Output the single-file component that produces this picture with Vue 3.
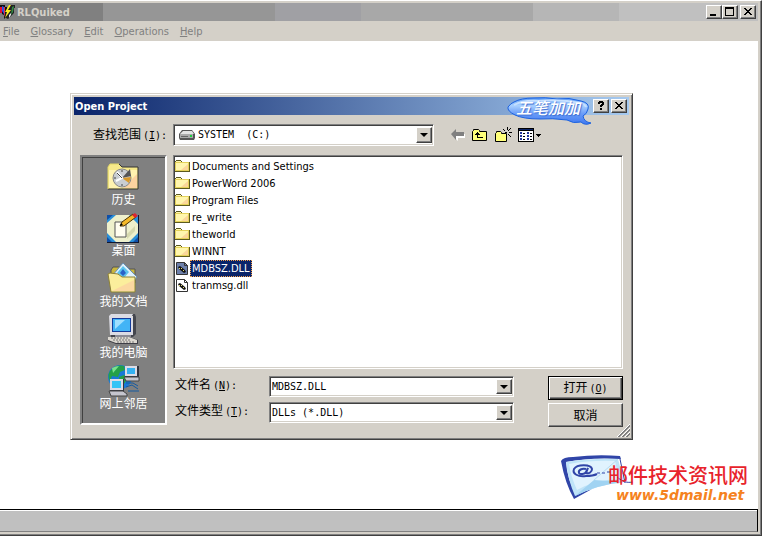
<script setup>
import { ref } from 'vue'

const menus = ['File', 'Glossary', 'Edit', 'Operations', 'Help']
const files = [
  { name: 'Documents and Settings', folder: true },
  { name: 'PowerWord 2006', folder: true },
  { name: 'Program Files', folder: true },
  { name: 're_write', folder: true },
  { name: 'theworld', folder: true },
  { name: 'WINNT', folder: true },
  { name: 'MDBSZ.DLL', folder: false },
  { name: 'tranmsg.dll', folder: false },
]
const places = [
  { id: 'history', label: '历史' },
  { id: 'desktop', label: '桌面' },
  { id: 'documents', label: '我的文档' },
  { id: 'computer', label: '我的电脑' },
  { id: 'network', label: '网上邻居' },
]
const selected = ref('MDBSZ.DLL')
const fileName = ref('MDBSZ.DLL')

function pick(file) {
  selected.value = file.name
  if (!file.folder) fileName.value = file.name
}
</script>

<template>
  <div class="window">
    <header class="titlebar">
      <svg class="app-icon" width="16" height="16" viewBox="0 0 16 16" aria-hidden="true">
        <path d="M0 1h5v2h2v9l-3 3v-4l-2-1v-2H0z" fill="#111" />
        <path d="M0 3h2v6H0z" fill="#e01030" />
        <path d="M2 2l2 1v7l-2-3z" fill="#3050e0" />
        <path d="M4 3h1v9H4z" fill="#e03050" />
        <path d="M10 1h5v3h-1v5l-3 3-3 3-4-2 1-3z" fill="#222" />
        <path d="M9 1L5 8h2l-2 6 6-8H8l3-5z" fill="#ffee20" />
        <path d="M12 3l2-1-1 6-2 3z" fill="#2f8b45" />
        <path d="M9 11l2-2v2l-2 3z" fill="#e8e8e8" />
      </svg>
      <h1>RLQuiked</h1>
      <div class="controls">
        <button class="cap" aria-label="Minimize">
          <svg width="12" height="10" viewBox="0 0 12 10"><path d="M2 7h6v2H2z" /></svg>
        </button>
        <button class="cap" aria-label="Maximize">
          <svg width="12" height="10" viewBox="0 0 12 10"><path d="M1 0h9v9H1zM2 2v6h7V2z" fill-rule="evenodd" /></svg>
        </button>
        <button class="cap close" aria-label="Close">
          <svg width="12" height="10" viewBox="0 0 12 10"><path d="M2 1h2v1h1v1h2V2h1V1h2v1H9v1H8v1H7v1h1v1h1v1h1v1H8V7H7V6H5v1H4v1H2V7h1V6h1V5h1V4H4V3H3V2H2z" /></svg>
        </button>
      </div>
    </header>

    <nav class="menubar">
      <button v-for="m in menus" :key="m"><u>{{ m[0] }}</u>{{ m.slice(1) }}</button>
    </nav>

    <main class="client">
      <a class="brand" href="#">
        <svg class="envelope" width="72" height="46" viewBox="0 0 72 46" aria-hidden="true">
          <path d="M0 6Q2 2 12 2Q36-1 59 1L60 4Q30 2 5 7Q6 24 15 39L31 34L13 44Q4 28 0 6z" fill="#3045a8" />
          <path d="M5 7Q30 3 57 4L63 27Q35 30 14 41Q7 25 5 7z" fill="#bfe4f8" />
          <path d="M8 9Q30 5 54 6L58 24Q34 25 16 35Q10 22 8 9z" fill="#e0f3fe" />
          <path d="M14 41L33 25L63 27Q35 30 14 41z" fill="#a0d3f2" />
          <path d="M33 25L57 4" stroke="#b6dcf2" fill="none" />
          <path d="M25 14c-4-1-8 1-7 4 1 2 6 1 7-1l2-4-2 5c3 1 6-1 6-4-1-5-15-5-18 0-2 5 4 8 12 7 5 0 9-1 11-2" fill="none" stroke="#3045a8" stroke-width="2" />
          <path d="M36 18h3m2 0h3m2-1h4M59 4l5 24M56 22c6 5 10 6 16 5" stroke="#3045a8" stroke-width="1" fill="none" />
        </svg>
        <span class="brand-text">
          <span class="brand-cn">邮件技术资讯网</span>
          <span class="brand-url">www.5dmail.net</span>
        </span>
      </a>
    </main>

    <footer class="status"></footer>

    <section class="dialog" role="dialog" aria-labelledby="dlg-title">
      <header class="dlg-title">
        <h2 id="dlg-title">Open Project</h2>
        <div class="controls">
          <button class="cap" aria-label="Help">
            <svg width="12" height="10" viewBox="0 0 12 10"><path d="M4 0h4v1h1v3H8v1H7v1H5V4h1V3h1V2H5v1H3V1h1zM5 7h2v2H5z" /></svg>
          </button>
          <button class="cap close" aria-label="Close">
            <svg width="12" height="10" viewBox="0 0 12 10"><path d="M2 1h2v1h1v1h2V2h1V1h2v1H9v1H8v1H7v1h1v1h1v1h1v1H8V7H7V6H5v1H4v1H2V7h1V6h1V5h1V4H4V3H3V2H2z" /></svg>
          </button>
        </div>
      </header>

      <div class="ime">
        <svg width="86" height="30" viewBox="0 0 86 30" aria-hidden="true">
          <defs>
            <linearGradient id="bubble" x1="0" y1="0" x2="0" y2="1">
              <stop offset="0" stop-color="#5b9cf6" />
              <stop offset="0.3" stop-color="#a9d0ff" />
              <stop offset="0.6" stop-color="#6a9cf8" />
              <stop offset="1" stop-color="#3f78f0" />
            </linearGradient>
          </defs>
          <path d="M1 10Q4 6 7 5Q14 1 27 1Q38 0 50 2Q62 0 74 4Q83 6 81 12Q80 17 76 19Q77 25 84 26Q78 29 74 25Q66 27 60 23Q45 21 33 22Q16 22 8 18Q0 14 1 10z" fill="url(#bubble)" stroke="#1c62e0" />
          <path d="M7 8Q16 3 32 4Q54 2 73 6Q78 7 79 10" fill="none" stroke="#c6e0ff" stroke-width="2" />
        </svg>
        <span>五笔加加</span>
      </div>

      <div class="dlg-body">
        <div class="lookin">
          <label for="look">查找范围<i>(<u>I</u>):</i></label>
          <div class="combo">
            <svg class="drive" width="16" height="10" viewBox="0 0 16 10" aria-hidden="true">
              <path d="M3 0h10l3 4v4l-1 2H1L0 8V4z" fill="#555" />
              <path d="M4 1h9l2 3H1z" fill="#e4e4e4" />
              <path d="M1 4h13v4H1z" fill="#aaa" />
              <path d="M2 6h7v1H2z" fill="#666" />
              <path d="M11 5h2v2h-2z" fill="#20d040" />
            </svg>
            <select id="look"><option>SYSTEM&nbsp; (C:)</option></select>
            <span class="arrow"></span>
          </div>
          <div class="tools">
            <button aria-label="Back">
              <svg width="14" height="12" viewBox="0 0 14 12"><path d="M2 7l5 5V9h7V5H8" fill="#fff" /><path d="M0 5l5-5v3h8v4H5v4z" fill="#808080" /></svg>
            </button>
            <button aria-label="Up one level">
              <svg width="16" height="14" viewBox="0 0 16 14">
                <path d="M.5 3.5l1-1v-1h5l1 1v1h7v9H.5z" fill="#ffff7a" stroke="#000" />
                <path d="M5 4h1v1h1v1h1v1H6v2h5v1H5V7H3V6h1V5h1z" />
              </svg>
            </button>
            <button aria-label="New folder">
              <svg width="17" height="16" viewBox="0 0 17 16">
                <path d="M.5 6.5l1-1v-1h4l1 1v1h5v8H.5z" fill="#ffff7a" stroke="#000" />
                <path d="M12 0h1v3h-1zM8 2h1v1H8zM9 3h1v1H9zM15 1h1v1h-1zM14 2h1v1h-1zM13 3h1v1h-1zM14 5h3v1h-3zM13 7h1v1h-1zM14 8h1v1h-1zM10 5h2v1h-2zM15 9h1v1h-1z" />
              </svg>
            </button>
            <button class="views" aria-label="Views">
              <svg width="24" height="14" viewBox="0 0 24 14">
                <path d="M0 0h16v14H0z" /><path d="M1 3h14v10H1z" fill="#fff" /><path d="M1 1h14v1H1z" fill="#0a246a" />
                <path d="M2 4h2v2H2zM2 7h2v2H2zM2 10h2v2H2zM9 4h2v2H9zM9 7h2v2H9zM9 10h2v2H9z" fill="#23349a" />
                <path d="M5 5h2v1H5zM5 8h2v1H5zM5 11h2v1H5zM12 5h2v1h-2zM12 8h2v1h-2zM12 11h2v1h-2z" />
                <path d="M18 6h5v1h-1v1h-1v1h-1V8h-1V7h-1z" />
              </svg>
            </button>
          </div>
        </div>

        <div class="panes">
          <nav class="places">
            <button v-for="p in places" :key="p.id">
              <svg width="34" height="32" viewBox="0 0 34 32" aria-hidden="true">
                <g v-if="p.id === 'history'">
                  <path d="M1 6l2-3h9l3 3h16v22H1z" fill="#f7e98a" />
                  <path d="M2 9h28v18H2z" fill="#fff3b0" />
                  <path d="M16 27l14-14v14z" fill="#fbd3a0" />
                  <path d="M12 3l3 3h16v22H1" fill="none" stroke="#333" />
                  <path d="M1 28V6l2-3h9" fill="none" stroke="#e2d868" />
                  <circle cx="15" cy="17" r="9" fill="#c9cdd1" stroke="#888" />
                  <path d="M15 17l8-9 1 7z" fill="#555" />
                  <path d="M15 17l9-1-2 6z" fill="#d99a2b" />
                  <path d="M10 11l5 6-6 3" fill="none" stroke="#fff" stroke-width="2" />
                  <path d="M10 12l5 5M15 9v2M15 23v2M7 17h2" fill="none" stroke="#444" />
                </g>
                <g v-else-if="p.id === 'desktop'">
                  <path d="M0 3h32v28H0z" fill="#101830" />
                  <path d="M0 3h31v27H0z" fill="#eef0cc" />
                  <path d="M0 3h9L0 11zM31 3v9L22 3zM0 30v-9l9 9zM31 30h-9l9-9z" fill="#2a8fd8" />
                  <path d="M0 3h6L0 8zM0 30v-5l5 5zM31 30h-5l5-5z" fill="#0f4fa8" />
                  <path d="M20 22l8-8v5l-8 8z" fill="#d6d8ae" />
                  <path d="M8 10h11v15H8z" fill="#fffdf0" stroke="#555" />
                  <path d="M13 14l2-4L26 2l3 3-12 9z" fill="#f4b929" stroke="#4b3200" />
                  <path d="M25 3l3-2 3 3-3 2z" fill="#dc2430" />
                  <path d="M13 14l1-3 2 2z" />
                </g>
                <g v-else-if="p.id === 'documents'">
                  <path d="M4 7l2-3h8l2 2h12v14H4z" fill="#c9b63e" stroke="#555" />
                  <path d="M5 13L16 0l14 14-4 5H8z" fill="#dff1fb" stroke="#698fb5" />
                  <path d="M10 10l6-7 6 6-5 6z" fill="#5cc4ee" />
                  <path d="M13 10l3-4 3 4-3 3z" fill="#2a62c8" />
                  <path d="M1 11l2-1 8 1 4 3h13v15H4z" fill="#fbee9c" stroke="#8d8134" />
                  <path d="M5 28l22-11v11z" fill="#fbd8a0" />
                </g>
                <g v-else-if="p.id === 'computer'">
                  <path d="M3 2l3-2h22l1 3v17l-3 3H4z" fill="#44464e" />
                  <path d="M2 2h24v19H3zM4 0h22l-1 2H2z" fill="#dcdce4" />
                  <path d="M5 4h19v14H5z" fill="#143c9c" />
                  <path d="M6 5h17v12H6z" fill="#42b4f6" />
                  <path d="M8 6h10L8 15z" fill="#9fe0ff" />
                  <path d="M8 21h16v3H8z" fill="#8c8c96" />
                  <path d="M1 23h22l8 3v4H9l-8-3z" fill="#3e3e46" />
                  <path d="M1 23h21l8 3v3H9l-8-3z" fill="#dcd8d0" />
                  <path d="M4 24h18M6 26h17M10 28h18" stroke="#777" stroke-dasharray="2 1" />
                </g>
                <g v-else>
                  <circle cx="13" cy="12" r="12" fill="#1878d8" />
                  <path d="M3 6Q9-1 17 1l1 4-5 2-2 5-6-1-2 5Q0 11 3 6zM12 12l5-2 4 3-4 6h-5z" fill="#24a048" />
                  <path d="M5 3Q9 1 12 1L6 8z" fill="#7ce08c" />
                  <path d="M18 1h14v12H18z" fill="#33353f" /><path d="M18 1h12v10H18z" fill="#dcdce6" /><path d="M20 3h8v6h-8z" fill="#35b2f2" />
                  <path d="M17 12h15v4H19z" fill="#c5c5ce" stroke="#444" />
                  <path d="M3 14h14v12H3z" fill="#33353f" /><path d="M3 14h13v11H3z" fill="#dcdce6" /><path d="M5 16h9v7H5z" fill="#35c4f6" />
                  <path d="M2 26h14l4 3v2H4z" fill="#c5c5ce" stroke="#444" />
                  <path d="M19 18h7l5 3M19 22l6-2 6 4M21 26h11" stroke="#155aa0" fill="none" />
                </g>
              </svg>
              <span>{{ p.label }}</span>
            </button>
          </nav>

          <div class="right">
            <div class="list" role="listbox" aria-label="Files">
              <button
                v-for="f in files"
                :key="f.name"
                role="option"
                :aria-selected="f.name === selected"
                :class="{ sel: f.name === selected }"
                @click="pick(f)"
              >
                <svg v-if="f.folder" width="15" height="15" viewBox="0 0 15 15" aria-hidden="true">
                  <path d="M0 2h1V1h5v1h1v1h8v10H0z" fill="#5c5a20" />
                  <path d="M0 3h14v9H0z" fill="#e4d25a" />
                  <path d="M1 2h5v1H1zM1 4h12v7H1z" fill="#fff6ae" />
                  <path d="M6 11l7-6v6z" fill="#fbd79a" />
                </svg>
                <svg v-else width="15" height="15" viewBox="0 0 15 15" aria-hidden="true">
                  <path class="paper" d="M1.5 1.5h8l3 3v9h-11z" stroke="#333" />
                  <path d="M9.500 1.500v3h3" fill="none" stroke="#333" />
                  <path d="M3 6l2-1 5 4 1 2-2 1-5-4z" fill="#111" />
                  <path d="M4 7h1v1H4zM6 7h1v1H6zM8 9h1v1H8z" fill="#e8e070" />
                </svg>
                <span>{{ f.name }}</span>
              </button>
            </div>

            <form class="fields" @submit.prevent>
              <div class="rows">
                <label for="fname">文件名<i>(<u>N</u>):</i></label>
                <div class="combo small">
                  <input id="fname" v-model="fileName" type="text" />
                  <button type="button" class="arrow" aria-label="Show recent names"></button>
                </div>
                <label for="ftype">文件类型<i>(<u>T</u>):</i></label>
                <div class="combo small">
                  <select id="ftype"><option>DLLs (*.DLL)</option></select>
                  <span class="arrow"></span>
                </div>
              </div>
              <div class="actions">
                <button class="default">打开<i>(<u>O</u>)</i></button>
                <button type="button">取消</button>
              </div>
            </form>
          </div>
        </div>
      </div>

      <svg class="grip" width="13" height="13" viewBox="0 0 13 13" aria-hidden="true">
        <path d="M0 13L13 0M4 13l9-9M8 13l5-5" stroke="#fff" />
        <path d="M1 13L13 1M2 13L13 2M5 13l8-8M6 13l7-7M9 13l4-4M10 13l3-3" stroke="#808080" />
      </svg>
    </section>
  </div>
</template>

<style>
body {
  margin: 0;
  background: #fff;
}
</style>

<style scoped>
* {
  box-sizing: border-box;
}
button,
input,
select {
  font: inherit;
  color: inherit;
  padding: 0;
  margin: 0;
  border: 0;
  border-radius: 0;
  background: none;
  appearance: none;
  outline: none;
}
h1,
h2 {
  margin: 0;
  font-size: 11px;
}
svg {
  display: block;
  flex: none;
}
.window {
  position: relative;
  display: flex;
  flex-direction: column;
  min-height: 100vh;
  padding: 2px 2px 2px 0;
  background: #d4d0c8;
  border-top: 1px solid #fff;
  border-right: 1px solid #404040;
  border-bottom: 1px solid #404040;
  box-shadow: inset -1px -1px #808080;
  font: 11px/13px "DejaVu Sans Condensed", "Noto Sans", sans-serif;
}
.titlebar {
  display: flex;
  align-items: center;
  height: 18px;
  margin-right: 1px;
  padding-right: 2px;
  color: #d4d0c8;
  background: linear-gradient(90deg, #808080 103px, #969696 103px 275px, #a0a0a4 275px 361px, #a8a8a8 361px 533px, #b6b6b6 533px 619px, #c0c0c0 619px);
}
.titlebar h1 {
  margin-left: 1px;
}
.controls {
  display: flex;
  margin-left: auto;
}
.cap {
  display: grid;
  place-items: center;
  width: 16px;
  height: 14px;
  color: #000;
  background: #d4d0c8;
  border: 1px solid;
  border-color: #fff #404040 #404040 #fff;
  box-shadow: inset -1px -1px #808080;
}
.cap.close {
  margin-left: 2px;
}
.menubar {
  display: flex;
  gap: 11px;
  height: 20px;
  padding-left: 3px;
  color: #808080;
}
.client {
  flex: 1;
  display: flex;
  align-items: flex-end;
  justify-content: flex-end;
  padding: 0 10px 6px 0;
  margin-right: 1px;
  background: #fff;
}
.brand {
  display: flex;
  text-decoration: none;
}
.envelope {
  margin-right: -25px;
}
.brand-text {
  position: relative;
  display: flex;
  flex-direction: column;
  padding-top: 8px;
}
.brand-cn {
  color: #e8232b;
  font: 500 20px/24px "Noto Sans CJK SC", sans-serif;
}
.brand-url {
  padding-left: 8px;
  color: #f58220;
  font: italic bold 14px/16px "DejaVu Sans", sans-serif;
}
.status {
  height: 23px;
  margin: 0 1px 1px 0;
  background: #c0c0c0;
  border-top: 1px solid #000;
  border-right: 1px solid #000;
  border-bottom: 1px solid #808080;
  box-shadow: inset 0 1px #fff;
}

.dialog {
  position: absolute;
  left: 70px;
  top: 92px;
  width: 563px;
  padding: 3px;
  background: #d4d0c8;
  border: 1px solid;
  border-color: #d4d0c8 #404040 #404040 #d4d0c8;
  box-shadow: inset 1px 1px #fff, inset -1px -1px #808080;
}
.dlg-title {
  display: flex;
  align-items: center;
  height: 18px;
  padding: 0 2px 0 1px;
  color: #fff;
  background: linear-gradient(90deg, #0a246a, #a6caf0);
}
.ime {
  position: absolute;
  right: 39px;
  top: 3px;
}
.ime span {
  position: absolute;
  left: 9px;
  top: 0;
  color: #fff;
  font: italic 500 16px/20px "Noto Sans CJK SC", sans-serif;
  white-space: nowrap;
  text-shadow: 1px 1px 1px #3e6fd0;
}
.dlg-body {
  padding: 9px 6px 9px 6px;
  font: 12px/16px "Noto Sans CJK SC", sans-serif;
}
i {
  font: 10px/16px "DejaVu Sans Mono", monospace;
  margin-left: 2px;
}
.lookin {
  display: grid;
  grid-template-columns: 87px 261px 1fr;
  column-gap: 6px;
  align-items: center;
}
.lookin label {
  justify-self: end;
  white-space: nowrap;
}
.combo {
  display: flex;
  align-items: center;
  height: 22px;
  padding: 2px;
  background: #fff;
  border: 1px solid;
  border-color: #808080 #fff #fff #808080;
  box-shadow: inset 1px 1px #404040, inset -1px -1px #d4d0c8;
  font: 10px/14px "DejaVu Sans Mono", monospace;
}
.combo.small {
  height: 21px;
}
.combo select,
.combo input {
  flex: 1;
  min-width: 0;
  height: 100%;
}
.drive {
  margin: 0 3px;
}
.arrow {
  display: grid;
  place-items: center;
  width: 16px;
  height: 100%;
  margin: -1px;
  box-sizing: border-box;
  background: #d4d0c8;
  border: 1px solid;
  border-color: #fff #404040 #404040 #fff;
  box-shadow: inset -1px -1px #808080;
  pointer-events: none;
}
button.arrow {
  margin: -1px;
  background: #d4d0c8;
  border: 1px solid;
  border-color: #fff #404040 #404040 #fff;
  pointer-events: auto;
}
.arrow::before {
  content: "";
  border: 4px solid transparent;
  border-top-color: #000;
  border-bottom: 0;
}
.tools {
  display: flex;
  align-items: center;
  gap: 7px;
  padding-left: 11px;
}
.views {
  margin-left: -1px;
}
.panes {
  display: grid;
  grid-template-columns: 87px 1fr;
  gap: 6px;
  margin-top: 9px;
}
.places {
  display: flex;
  flex-direction: column;
  height: 270px;
  padding-top: 4px;
  color: #fff;
  background: #808080;
  border: 2px solid;
  border-color: #808080 #fff #fff #808080;
  box-shadow: inset 1px 1px #404040;
}
.places button {
  display: flex;
  flex-direction: column;
  align-items: center;
  height: 51px;
}
.places span {
  line-height: 12px;
}
.right {
  display: flex;
  flex-direction: column;
  gap: 7px;
}
.list {
  display: flex;
  flex-direction: column;
  align-items: flex-start;
  height: 214px;
  padding: 2px 1px;
  background: #fff;
  border: 1px solid;
  border-color: #808080 #fff #fff #808080;
  box-shadow: inset 1px 1px #404040, inset -1px -1px #d4d0c8;
  font: 11px/15px "DejaVu Sans Condensed", "Noto Sans", sans-serif;
}
.list button {
  display: flex;
  align-items: center;
  height: 17px;
}
.list span {
  padding: 0 1px;
  border: 1px solid transparent;
}
.paper {
  fill: #fff;
}
.sel .paper {
  fill: #6d80ab;
}
.list .sel span {
  color: #fff;
  background: #0a246a;
  border: 1px dotted #f5a04a;
}
.fields {
  display: flex;
  justify-content: space-between;
  padding-left: 2px;
}
.rows {
  display: grid;
  grid-template-columns: 94px 245px;
  row-gap: 5px;
  align-content: start;
}
.actions {
  display: flex;
  flex-direction: column;
  gap: 3px;
}
.actions button {
  width: 75px;
  height: 24px;
  border: 1px solid;
  border-color: #fff #404040 #404040 #fff;
  box-shadow: inset -1px -1px #808080;
}
.actions .default {
  border-color: #000;
  box-shadow: inset 1px 1px #fff, inset -1px -1px #404040, inset -2px -2px #808080;
}
.grip {
  position: absolute;
  right: 2px;
  bottom: 2px;
}
</style>
